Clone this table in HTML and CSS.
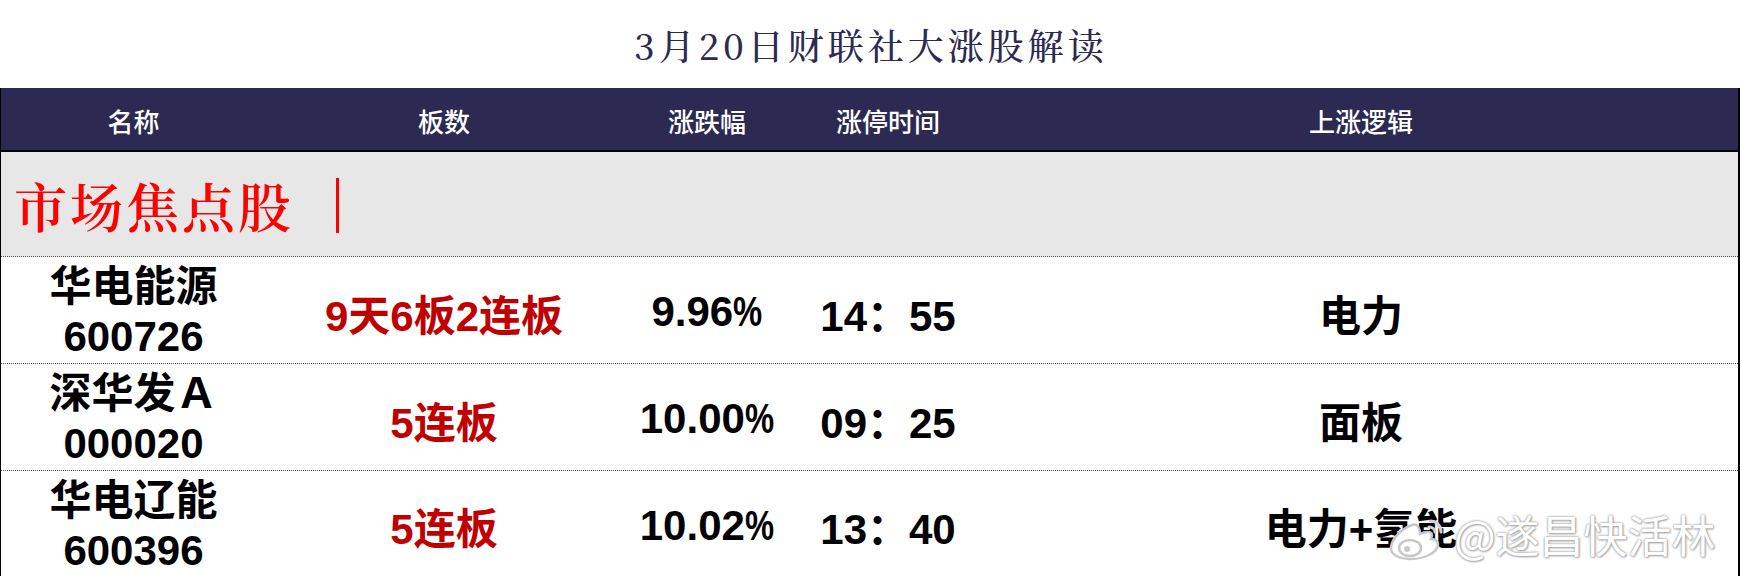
FILE: index.html
```html
<!DOCTYPE html>
<html lang="zh-CN">
<head>
<meta charset="utf-8">
<title>3月20日财联社大涨股解读</title>
<link rel="stylesheet" href="styles.css">
</head>
<body>
<div class="page">
  <h1 class="title">3月20日财联社大涨股解读</h1>
  <div class="table">
    <div class="row head">
      <div class="cell">名称</div>
      <div class="cell">板数</div>
      <div class="cell">涨跌幅</div>
      <div class="cell">涨停时间</div>
      <div class="cell">上涨逻辑</div>
    </div>
    <div class="section">市场焦点股<span class="bar"></span></div>
    <div class="row body">
      <div class="cell name">华电能源<br>600726</div>
      <div class="cell red">9天6板2连板</div>
      <div class="cell">9.96<span class="pct">%</span></div>
      <div class="cell">14：55</div>
      <div class="cell">电力</div>
    </div>
    <div class="row body">
      <div class="cell name">深华发Ａ<br>000020</div>
      <div class="cell red">5连板</div>
      <div class="cell">10.00<span class="pct">%</span></div>
      <div class="cell">09：25</div>
      <div class="cell">面板</div>
    </div>
    <div class="row body last">
      <div class="cell name">华电辽能<br>600396</div>
      <div class="cell red">5连板</div>
      <div class="cell">10.02<span class="pct">%</span></div>
      <div class="cell">13：40</div>
      <div class="cell">电力+氢能</div>
    </div>
  </div>
  <div class="watermark">
    <svg class="weibo" width="62" height="44" viewBox="0 0 62 44">
      <path d="M26 8c-9 3-20 13-21 22-1 8 9 12 20 12 13 0 26-6 27-14 0-5-5-6-7-6 2-4 1-7-3-7-3 0-6 1-8 2 0-5-2-11-8-9z" fill="#fff" stroke="#c8c8c8" stroke-width="2.5"/>
      <ellipse cx="24" cy="31" rx="11" ry="8" fill="#fff" stroke="#c8c8c8" stroke-width="2.5"/>
      <circle cx="21" cy="32" r="3" fill="#c8c8c8"/>
      <path d="M44 4c6 0 11 4 11 11" fill="none" stroke="#d0d0d0" stroke-width="3" stroke-linecap="round"/>
      <path d="M43 10c3 0 6 2 6 5" fill="none" stroke="#d0d0d0" stroke-width="3" stroke-linecap="round"/>
    </svg>
    <span class="wm-text">@遂昌快活林</span>
  </div>
</div>
</body>
</html>
```

FILE: styles.css
```css
html, body {
  margin: 0;
  padding: 0;
  background: #ffffff;
}
.page {
  position: relative;
  width: 1740px;
  height: 576px;
  overflow: hidden;
}
.title {
  margin: 0;
  height: 88px;
  display: flex;
  align-items: center;
  justify-content: center;
  padding-left: 2px;
  font-family: "Noto Serif CJK SC", "Liberation Serif", "Noto Sans CJK SC", serif;
  font-weight: 500;
  font-size: 36px;
  letter-spacing: 4px;
  color: #2c2a52;
  box-sizing: border-box;
}
.table {
  width: 1740px;
  border-left: 1px solid #000;
  border-right: 2px solid #000;
  border-bottom: 2px solid #000;
  box-sizing: border-box;
}
.row {
  display: grid;
  grid-template-columns: 265px 356px 170px 192px 1fr;
}
.cell {
  display: flex;
  align-items: center;
  justify-content: center;
  text-align: center;
}
.head {
  height: 62px;
  background: #2c2a52;
  border-bottom: 2px solid #000;
  color: #ffffff;
  font-family: "Noto Sans CJK SC", sans-serif;
  font-weight: 500;
  font-size: 26px;
}
.head .cell {
  padding-top: 2px;
}
.section {
  height: 105px;
  background: #e7e7e7;
  border-bottom: 1px dotted #555;
  display: flex;
  align-items: center;
  padding-left: 13px;
  padding-top: 2px;
  font-family: "Noto Serif CJK SC", "Noto Sans CJK SC", serif;
  font-weight: 600;
  font-size: 53px;
  letter-spacing: 3px;
  color: #ff0000;
  box-sizing: border-box;
}
.bar {
  display: inline-block;
  width: 3px;
  height: 55px;
  background: #ff0000;
  margin-left: 42px;
}
.body {
  height: 106px;
  border-bottom: 1px dotted #555;
  font-family: "Liberation Sans", "Noto Sans CJK SC", sans-serif;
  font-weight: 700;
  font-size: 42px;
  color: #000000;
}
.body.last {
  border-bottom: none;
  height: 105px;
}
.body .cell {
  padding-top: 4px;
}
.name {
  line-height: 50px;
}
.red {
  color: #c00000;
}
.pct {
  display: inline-block;
  transform: scaleX(0.78);
  transform-origin: left center;
  margin-right: -8px;
}
.watermark {
  position: absolute;
  left: 1386px;
  top: 502px;
  display: flex;
  align-items: center;
  gap: 6px;
}
.weibo {
  display: block;
  margin-top: 10px;
}
.wm-text {
  font-family: "Noto Sans CJK SC", sans-serif;
  font-size: 44px;
  font-weight: 400;
  color: #ffffff;
  text-shadow: 0 0 2px #9a9a9a, 0 0 3px #bbbbbb, 1px 1px 2px #aaaaaa;
}
```
